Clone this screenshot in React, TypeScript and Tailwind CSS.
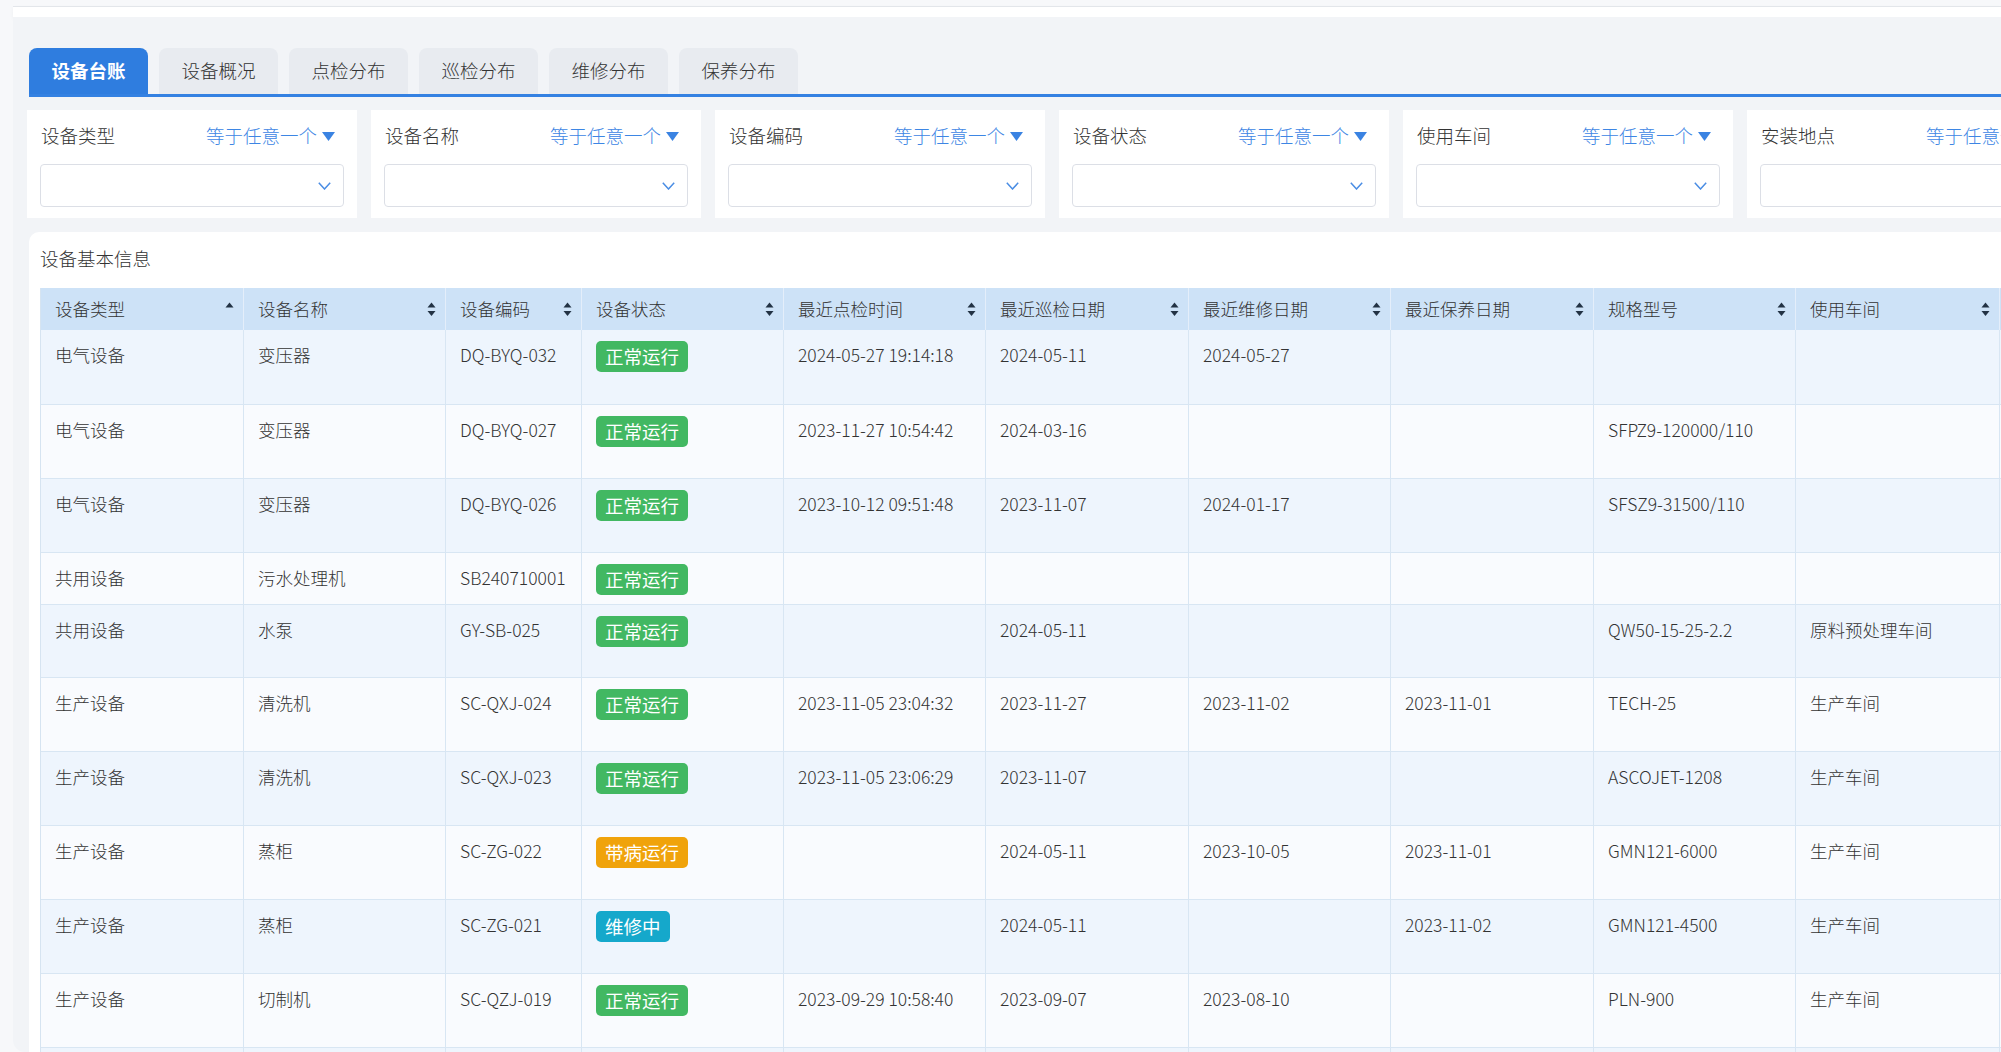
import React from 'react';

type Status = '正常运行' | '带病运行' | '维修中';

const STATUS_COLOR: Record<Status, string> = {
  正常运行: 'bg-[#42b862]',
  带病运行: 'bg-[#f0a30b]',
  维修中: 'bg-[#15a8cb]',
};

const TABS = ['设备台账', '设备概况', '点检分布', '巡检分布', '维修分布', '保养分布'];
const FILTERS = ['设备类型', '设备名称', '设备编码', '设备状态', '使用车间', '安装地点'];

const COLUMNS = [
  { label: '设备类型', w: 'w-[203px]' },
  { label: '设备名称', w: 'w-[202px]' },
  { label: '设备编码', w: 'w-[136px]' },
  { label: '设备状态', w: 'w-[202px]' },
  { label: '最近点检时间', w: 'w-[202px]' },
  { label: '最近巡检日期', w: 'w-[203px]' },
  { label: '最近维修日期', w: 'w-[202px]' },
  { label: '最近保养日期', w: 'w-[203px]' },
  { label: '规格型号', w: 'w-[202px]' },
  { label: '使用车间', w: 'w-[204px]' },
];

type Row = [string, string, string, Status | '', string, string, string, string, string, string];

const ROWS: { h: string; cells: Row }[] = [
  { h: 'h-[75px]', cells: ['电气设备', '变压器', 'DQ-BYQ-032', '正常运行', '2024-05-27 19:14:18', '2024-05-11', '2024-05-27', '', '', ''] },
  { h: 'h-[74px]', cells: ['电气设备', '变压器', 'DQ-BYQ-027', '正常运行', '2023-11-27 10:54:42', '2024-03-16', '', '', 'SFPZ9-120000/110', ''] },
  { h: 'h-[74px]', cells: ['电气设备', '变压器', 'DQ-BYQ-026', '正常运行', '2023-10-12 09:51:48', '2023-11-07', '2024-01-17', '', 'SFSZ9-31500/110', ''] },
  { h: 'h-[52px]', cells: ['共用设备', '污水处理机', 'SB240710001', '正常运行', '', '', '', '', '', ''] },
  { h: 'h-[73px]', cells: ['共用设备', '水泵', 'GY-SB-025', '正常运行', '', '2024-05-11', '', '', 'QW50-15-25-2.2', '原料预处理车间'] },
  { h: 'h-[74px]', cells: ['生产设备', '清洗机', 'SC-QXJ-024', '正常运行', '2023-11-05 23:04:32', '2023-11-27', '2023-11-02', '2023-11-01', 'TECH-25', '生产车间'] },
  { h: 'h-[74px]', cells: ['生产设备', '清洗机', 'SC-QXJ-023', '正常运行', '2023-11-05 23:06:29', '2023-11-07', '', '', 'ASCOJET-1208', '生产车间'] },
  { h: 'h-[74px]', cells: ['生产设备', '蒸柜', 'SC-ZG-022', '带病运行', '', '2024-05-11', '2023-10-05', '2023-11-01', 'GMN121-6000', '生产车间'] },
  { h: 'h-[74px]', cells: ['生产设备', '蒸柜', 'SC-ZG-021', '维修中', '', '2024-05-11', '', '2023-11-02', 'GMN121-4500', '生产车间'] },
  { h: 'h-[74px]', cells: ['生产设备', '切制机', 'SC-QZJ-019', '正常运行', '2023-09-29 10:58:40', '2023-09-07', '2023-08-10', '', 'PLN-900', '生产车间'] },
  { h: 'h-[74px]', cells: ['', '', '', '', '', '', '', '', '', ''] },
];

function SortIcon({ upOnly }: { upOnly?: boolean }) {
  return (
    <svg width="9" height="15" viewBox="0 0 9 15" className="shrink-0">
      <path d="M4.5 0.5 L8.5 5.5 L0.5 5.5 Z" fill="#223244" />
      {!upOnly && <path d="M0.5 9 L8.5 9 L4.5 14 Z" fill="#223244" />}
    </svg>
  );
}

function FilterCard({ label }: { label: string }) {
  return (
    <div className="w-[330px] h-[108px] shrink-0 bg-white px-[13px] pt-[12px]">
      <div className="flex h-[28px] items-center justify-between pl-[1px] pr-[9px]">
        <span className="text-[18.5px] font-light text-[#333]">{label}</span>
        <span className="flex items-center gap-[5px] text-[18.5px] font-light text-[#3d86e4]">
          等于任意一个
          <svg width="13" height="9" viewBox="0 0 13 9">
            <path d="M0 0 H13 L6.5 9 Z" fill="#3a83e2" />
          </svg>
        </span>
      </div>
      <div className="mt-[14px] flex h-[43px] items-center justify-end rounded-[4px] border border-[#dcdfe6] pr-[12px]">
        <svg width="13" height="8" viewBox="0 0 13 8">
          <path d="M0.8 0.8 L6.5 7 L12.2 0.8" fill="none" stroke="#4a8de4" strokeWidth="1.5" />
        </svg>
      </div>
    </div>
  );
}

export default function App() {
  return (
    <div className="h-[1052px] w-full overflow-hidden bg-[#f7f8fa] font-['Noto_Sans_CJK_SC','Noto_Sans',sans-serif] text-[#333]">
      <div className="ml-[13px] mt-[6px] h-[11px] border-t border-[#e3e6ea] bg-white shadow-[0_2px_4px_rgba(0,0,0,0.04)]" />
      <div className="ml-[13px] h-[1035px] overflow-hidden rounded-bl-[12px] bg-[#f2f4f7] pl-[14px]">
        {/* tabs */}
        <div className="ml-[2px] mt-[31px] flex h-[49px] items-end gap-[11px] border-b-[3px] border-[#3481e2]">
          {TABS.map((t, i) => (
            <div
              key={t}
              className={
                i === 0
                  ? 'flex h-[46px] w-[119px] items-center justify-center rounded-t-[8px] bg-[#2f7ddf] text-[18.5px] font-bold text-white'
                  : 'flex h-[46px] w-[119px] items-center justify-center rounded-t-[8px] bg-[#e8ebf0] text-[18.5px] font-light text-[#333]'
              }
            >
              {t}
            </div>
          ))}
        </div>

        {/* filters */}
        <div className="mt-[13px] flex gap-[14px]">
          {FILTERS.map((f) => (
            <FilterCard key={f} label={f} />
          ))}
        </div>

        {/* main card */}
        <div className="ml-[2px] mt-[14px] h-[900px] overflow-hidden rounded-tl-[10px] bg-white pl-[11px] pt-[12px]">
          <div className="text-[18.5px] font-light leading-[28px] text-[#333]">设备基本信息</div>
          <div className="mt-[16px] w-max border-l border-[#d6e4f1]">
            <div className="flex h-[42px] bg-[#cde2f7]">
              {COLUMNS.map((c, i) => (
                <div
                  key={c.label}
                  className={`${c.w} flex shrink-0 items-center justify-between border-r border-[#e4eefa] pl-[14px] pr-[9px] text-[17.5px] font-light text-[#333]`}
                >
                  <span>{c.label}</span>
                  <SortIcon upOnly={i === 0} />
                </div>
              ))}
              <div className="w-[40px] shrink-0" />
            </div>
            {ROWS.map((r, ri) => (
              <div
                key={ri}
                className={`flex ${r.h} border-b border-[#d8e6f3] ${ri % 2 === 0 ? 'bg-[#eef5fd]' : 'bg-[#f9fbfe]'}`}
              >
                {COLUMNS.map((c, ci) => {
                  const v = r.cells[ci];
                  return (
                    <div
                      key={c.label}
                      className={`${c.w} shrink-0 border-r border-[#d8e6f3] px-[14px] pt-[11px] text-[17.5px] font-light leading-[28px] text-[#333]`}
                    >
                      {ci === 3 && v ? (
                        <span
                          className={`inline-block h-[31px] rounded-[5px] px-[9px] text-[18.5px] font-normal leading-[31px] text-white ${STATUS_COLOR[v as Status]}`}
                        >
                          {v}
                        </span>
                      ) : (
                        v
                      )}
                    </div>
                  );
                })}
                <div className="w-[40px] shrink-0" />
              </div>
            ))}
          </div>
        </div>
      </div>
    </div>
  );
}
